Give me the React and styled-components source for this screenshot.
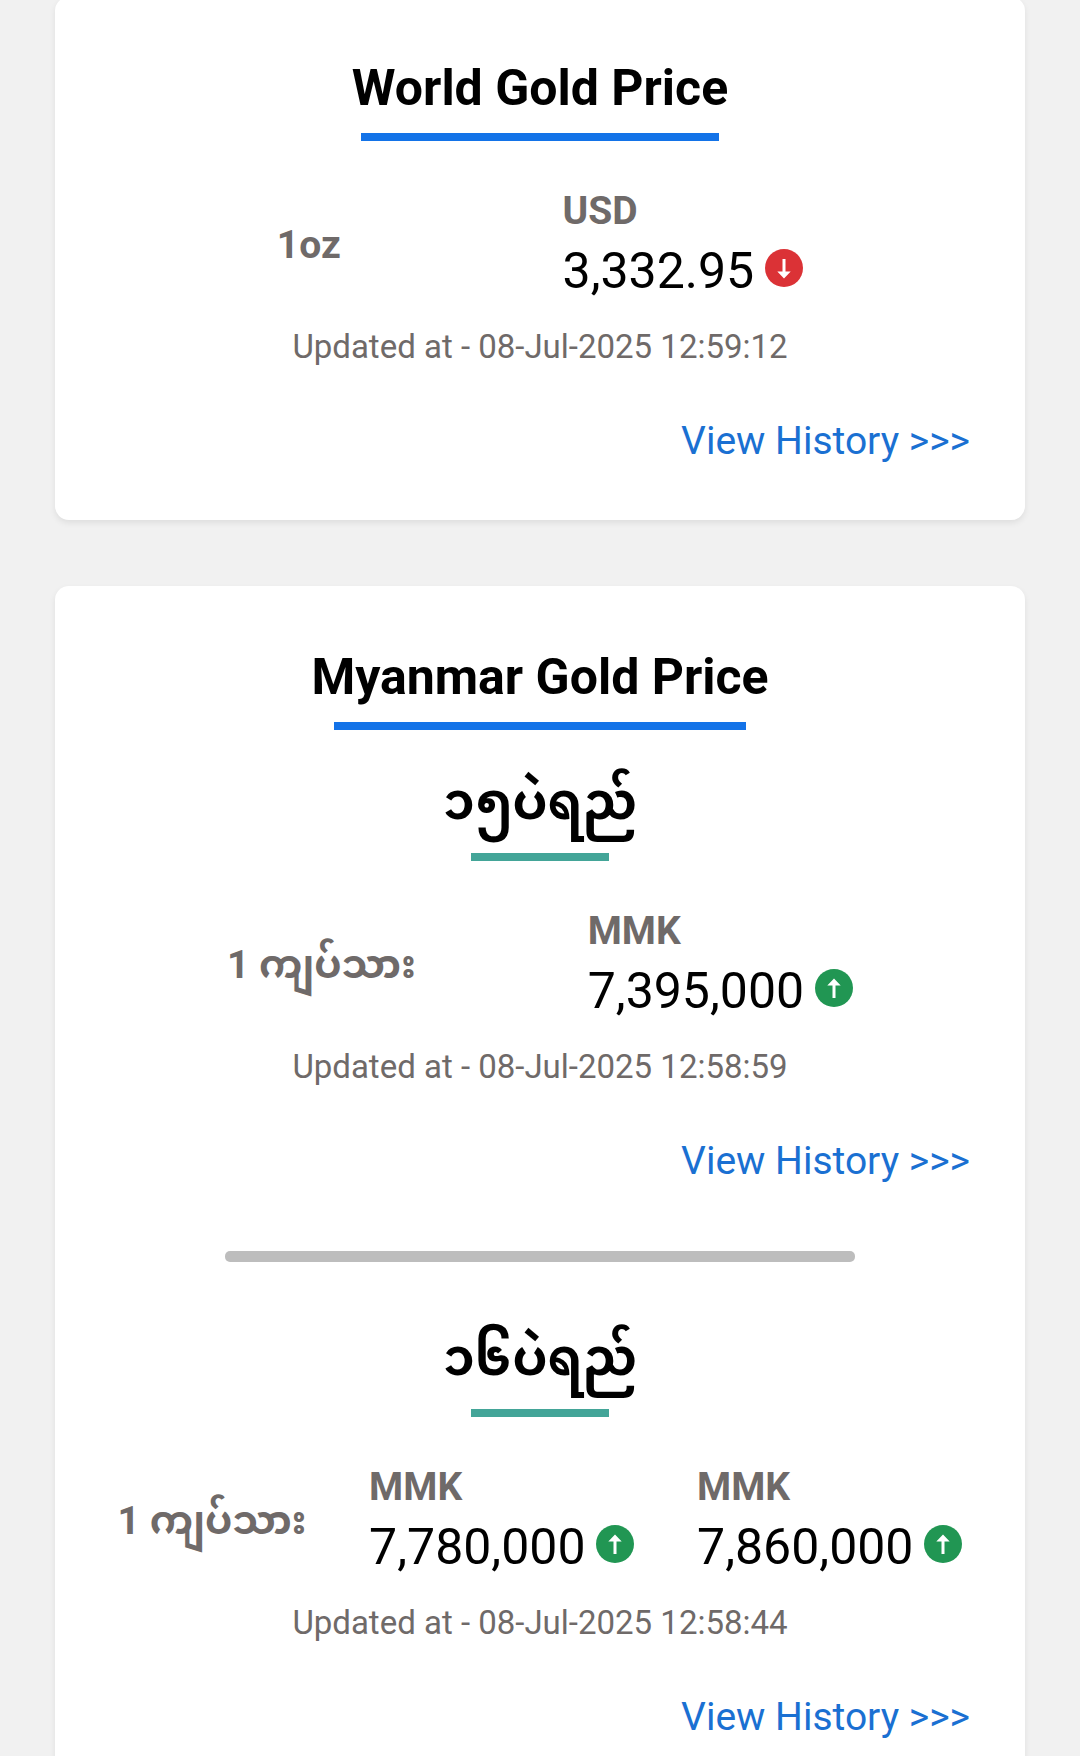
import React from "react";
import styled, { createGlobalStyle } from "styled-components";

const worldPrice = {
  unit: "1oz",
  prices: [{ currency: "USD", value: "3,332.95", trend: "down" }],
  updatedAt: "08-Jul-2025 12:59:12",
};

const myanmarPrices = [
  {
    name: "၁၅ပဲရည်",
    unit: "1 ကျပ်သား",
    prices: [{ currency: "MMK", value: "7,395,000", trend: "up" }],
    updatedAt: "08-Jul-2025 12:58:59",
  },
  {
    name: "၁၆ပဲရည်",
    unit: "1 ကျပ်သား",
    prices: [
      { currency: "MMK", value: "7,780,000", trend: "up" },
      { currency: "MMK", value: "7,860,000", trend: "up" },
    ],
    updatedAt: "08-Jul-2025 12:58:44",
  },
];

const TrendIcon = ({ trend }) => (
  <TrendSvg viewBox="0 0 38 38" role="img" aria-label={trend}>
    <circle cx="19" cy="19" r="19" fill={trend === "up" ? "#219653" : "#db3236"} />
    {trend === "up" ? (
      <path d="M19 9.5 L25.7 16.5 H20.5 V29 H17.5 V16.5 H12.3 Z" fill="#fff" />
    ) : (
      <path d="M19 29.5 L12.3 22.5 H17.5 V10 H20.5 V22.5 H25.7 Z" fill="#fff" />
    )}
  </TrendSvg>
);

const PriceInfo = ({ unit, prices, updatedAt }) => (
  <>
    <PriceRow>
      <Unit>{unit}</Unit>
      {prices.map((price) => (
        <div key={price.value}>
          <Currency>{price.currency}</Currency>
          <Price>
            {price.value}
            <TrendIcon trend={price.trend} />
          </Price>
        </div>
      ))}
    </PriceRow>
    <Updated>Updated at - {updatedAt}</Updated>
    <HistoryLink href="#history">View History &gt;&gt;&gt;</HistoryLink>
  </>
);

const App = () => {
  return (
    <Page>
      <GlobalStyle />
      <Card>
        <Title>World Gold Price</Title>
        <Underline $width={358} />
        <PriceInfo {...worldPrice} />
      </Card>
      <Card>
        <Title>Myanmar Gold Price</Title>
        <Underline $width={412} />
        {myanmarPrices.map((item) => (
          <Section key={item.name}>
            <SubTitle lang="my">{item.name}</SubTitle>
            <Underline $width={138} $color="#43a598" />
            <PriceInfo {...item} />
          </Section>
        ))}
      </Card>
    </Page>
  );
};

export default App;

const GlobalStyle = createGlobalStyle`
  * {
    box-sizing: border-box;
  }
  body {
    margin: 0;
    background-color: #f1f1f1;
    color: #000;
    font-family: Roboto, "Noto Sans Myanmar", "Noto Sans", sans-serif;
  }
`;

const Page = styled.main`
  display: flex;
  flex-direction: column;
  gap: 66px;
  margin-top: -3px;
  padding: 0 55px;
`;

const Card = styled.section`
  display: flex;
  flex-direction: column;
  align-items: center;
  padding: 61px 0 51px;
  border-radius: 14px;
  background-color: #fff;
  box-shadow: 0 3px 6px rgba(0, 0, 0, 0.08);
`;

const Section = styled.div`
  display: flex;
  flex-direction: column;
  align-items: center;
  width: 100%;
  padding-top: 33px;

  & + & {
    padding-top: 0;
  }
  & + &::before {
    content: "";
    width: 65%;
    height: 11px;
    margin: 62px 0 57px;
    border-radius: 5px;
    background-color: #bdbdbd;
  }
`;

const Title = styled.h2`
  margin: 0 0 15px;
  font-size: 50px;
  font-weight: 700;
  line-height: 60px;
`;

const SubTitle = styled.h3`
  margin: 0 0 12px;
  font-size: 50px;
  font-weight: 700;
  line-height: 78px;
`;

const Underline = styled.div`
  width: ${(props) => props.$width}px;
  max-width: 100%;
  height: 8px;
  background-color: ${(props) => props.$color || "#1373e8"};
`;

const PriceRow = styled.div`
  display: flex;
  justify-content: space-evenly;
  align-items: center;
  width: 100%;
  margin-top: 43px;
`;

const Unit = styled.div`
  padding-top: 3px;
  color: #6f6a69;
  font-size: 39px;
  font-weight: 700;
  line-height: 55px;
`;

const Currency = styled.div`
  color: #6f6a69;
  font-size: 39px;
  font-weight: 700;
  line-height: 55px;
`;

const Price = styled.div`
  display: flex;
  align-items: center;
  gap: 11px;
  font-size: 50px;
  line-height: 64px;
`;

const TrendSvg = styled.svg`
  width: 38px;
  height: 38px;
  margin-bottom: 6px;
`;

const Updated = styled.p`
  margin: 22px 0 45px;
  color: #6f6a69;
  font-size: 33px;
  line-height: 44px;
`;

const HistoryLink = styled.a`
  align-self: flex-end;
  margin-right: 55px;
  color: #1a70d2;
  font-size: 39px;
  line-height: 55px;
  text-decoration: none;
`;
